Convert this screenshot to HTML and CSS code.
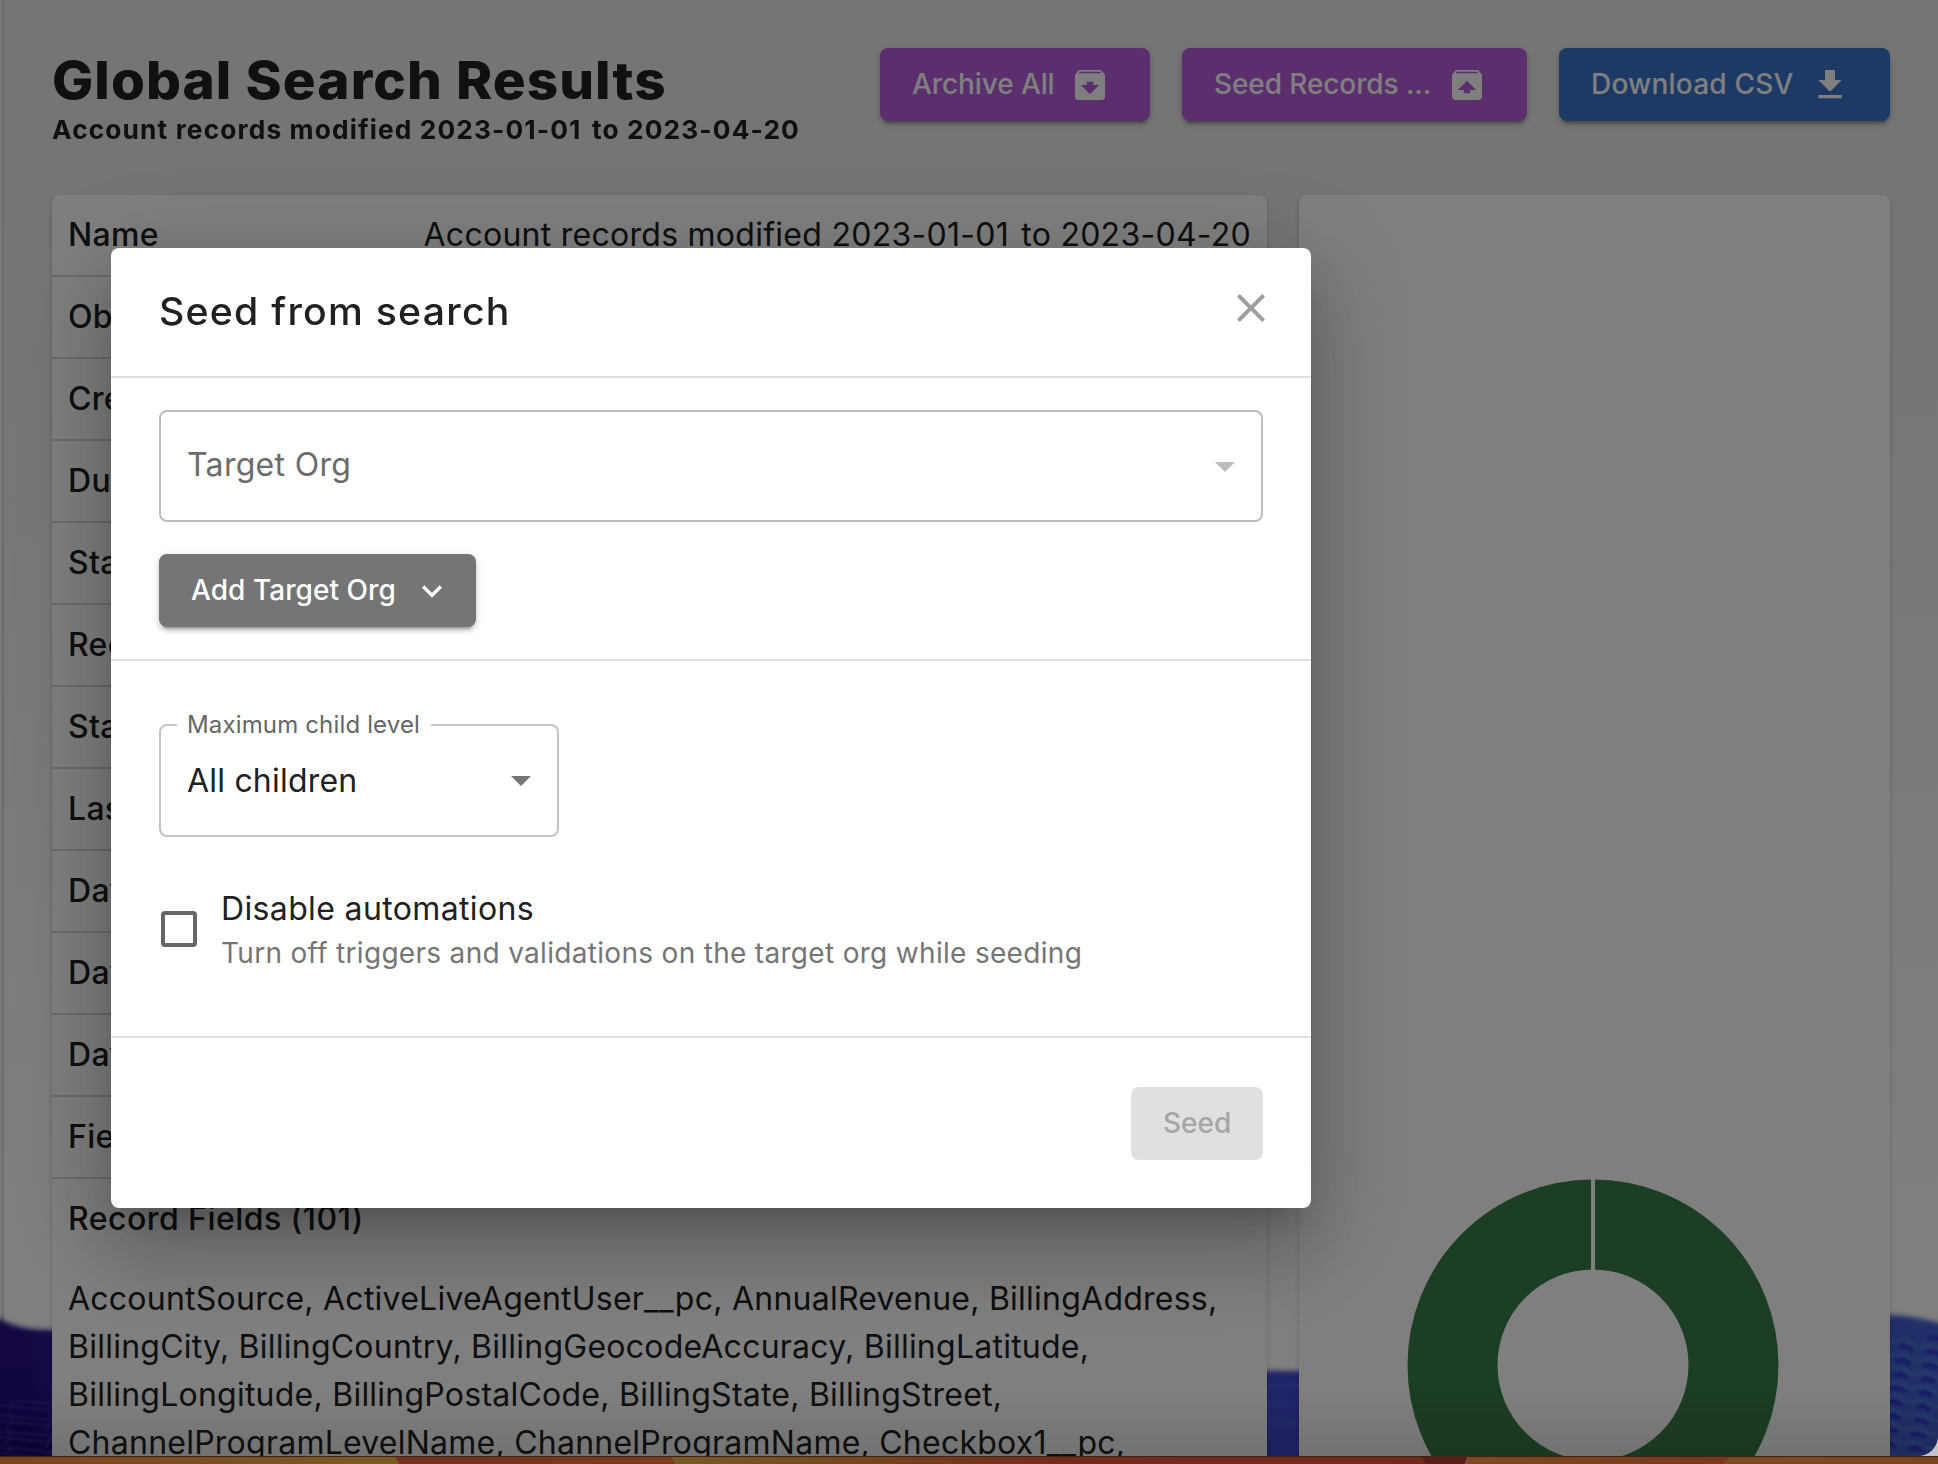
FILE: index.html
```html
<!DOCTYPE html>
<html lang="en">
<head>
<meta charset="utf-8">
<title>Global Search Results</title>
<link rel="stylesheet" href="styles.css">
</head>
<body>
<div class="app">
  <div class="rail"></div>
  <div class="page">
    <svg class="waves" viewBox="0 0 1938 164" preserveAspectRatio="none" aria-hidden="true">
      <defs>
        <linearGradient id="sea" x1="0" x2="1" y1="0" y2="0">
          <stop offset="0" stop-color="#241080"/><stop offset=".03" stop-color="#28128a"/><stop offset=".65" stop-color="#4148d0"/><stop offset=".95" stop-color="#4058d0"/><stop offset="1" stop-color="#4464d4"/>
        </linearGradient>
        <linearGradient id="deep" x1="0" x2="0" y1="0" y2="1"><stop offset="0" stop-color="#180870" stop-opacity="0"/><stop offset="1" stop-color="#140468"/></linearGradient>
        <pattern id="grid" width="40" height="16" patternUnits="userSpaceOnUse" patternTransform="rotate(5)">
          <path d="M0 3H40M0 9H40M24 0L18 16" fill="none" stroke="#5340b8" stroke-width="2" opacity=".5"/>
        </pattern>
        <pattern id="ripples" width="28" height="14" patternUnits="userSpaceOnUse" patternTransform="rotate(10)">
          <path d="M0 5Q7 1 14 5T28 5" fill="none" stroke="#5498d4" stroke-width="3" opacity=".4"/>
          <path d="M2 11Q9 7 16 11" fill="none" stroke="#2418c8" stroke-width="4" opacity=".6"/>
        </pattern>
        <filter id="soft"><feGaussianBlur stdDeviation="2.5"/></filter>
        <filter id="haze"><feGaussianBlur stdDeviation="1"/></filter>
      </defs>
      <path d="M-10 14C8 24 20 30 52 30C500 60 1100 70 1290 71C1500 68 1750 16 1890 15C1910 15 1925 20 1950 25V180H-10Z" fill="url(#sea)" filter="url(#soft)"/>
      <path d="M-10 60H60V180H-10Z" fill="url(#deep)"/>
      <g filter="url(#haze)">
        <path d="M-10 100H60V180H-10Z" fill="url(#grid)"/>
        <path d="M1880 36H1950V180H1880Z" fill="url(#ripples)"/>
        <path d="M1260 86H1310M1260 104H1310M1260 122H1310" stroke="#5060dc" stroke-width="6" opacity=".4"/>
      </g>
    </svg>
    <header class="head">
      <div class="titles">
        <h1 class="title">Global Search Results</h1>
        <h2 class="subtitle">Account records modified 2023-01-01 <span class="to">to</span> 2023-04-20</h2>
      </div>
      <div class="actions">
        <button class="btn purple w-archive"><span>Archive All</span><svg class="icon" viewBox="0 0 24 24"><path d="M20.54 5.23l-1.39-1.68C18.88 3.21 18.47 3 18 3H6c-.47 0-.88.21-1.16.55L3.46 5.23C3.17 5.57 3 6.02 3 6.5V19c0 1.1.9 2 2 2h14c1.1 0 2-.9 2-2V6.5c0-.48-.17-.93-.46-1.27zM12 17.5L6.5 12H10v-2h4v2h3.500L12 17.5zM5.120 5l.81-1h12l.94 1H5.120z"/></svg></button>
        <button class="btn purple w-seed"><span>Seed Records ...</span><svg class="icon" viewBox="0 0 24 24"><path d="M20.55 5.220l-1.39-1.680C18.880 3.210 18.470 3 18 3H6c-.47 0-.88.210-1.150.550L3.460 5.220C3.170 5.570 3 6.010 3 6.500V19c0 1.100.890 2 2 2h14c1.100 0 2-.900 2-2V6.500c0-.490-.170-.930-.450-1.280zM12 9.500l5.500 5.500H14v2h-4v-2H6.500L12 9.500zM5.120 5l.820-1h12l.930 1H5.120z"/></svg></button>
        <button class="btn blue w-csv"><span>Download CSV</span><svg class="icon" viewBox="0 0 24 24"><path d="M19 9h-4V3H9v6H5l7 7 7-7zM5 18v2h14v-2H5z"/></svg></button>
      </div>
    </header>
    <main class="cards">
      <section class="card details">
        <div class="row"><b>Name</b><span>Account records modified 2023-01-01 <span class="to">to</span> 2023-04-20</span></div>
        <div class="row"><b>Object</b></div>
        <div class="row"><b>Created</b></div>
        <div class="row"><b>Duration</b></div>
        <div class="row"><b>Status</b></div>
        <div class="row"><b>Records</b></div>
        <div class="row"><b>Started</b></div>
        <div class="row"><b>Last run</b></div>
        <div class="row"><b>Days</b></div>
        <div class="row"><b>Days from</b></div>
        <div class="row"><b>Days to</b></div>
        <div class="row"><b>Fields</b></div>
        <div class="row last"><b>Record Fields (101)</b></div>
        <p class="fields">AccountSource, ActiveLiveAgentUser__pc, AnnualRevenue, BillingAddress,<br>BillingCity, BillingCountry, BillingGeocodeAccuracy, BillingLatitude,<br>BillingLongitude, BillingPostalCode, BillingState, BillingStreet,<br>ChannelProgramLevelName, ChannelProgramName, Checkbox1__pc,</p>
      </section>
      <section class="card chart">
        <svg class="donut" viewBox="0 0 372 372"><circle cx="186" cy="186" r="140.500" fill="none" stroke="#387c48" stroke-width="90"/><path d="M186 0V92" stroke="#fff" stroke-width="4"/></svg>
      </section>
    </main>
  </div>
</div>
<div class="backdrop"></div>
<svg class="wallpaper" viewBox="0 0 1938 8" preserveAspectRatio="none" aria-hidden="true">
  <defs>
    <linearGradient id="w1"><stop offset="0" stop-color="#7a4322"/><stop offset="1" stop-color="#7b5b25"/></linearGradient>
    <linearGradient id="w2"><stop offset="0" stop-color="#73301d"/><stop offset="1" stop-color="#7a3c1d"/></linearGradient>
    <linearGradient id="w3"><stop offset="0" stop-color="#7a5a26"/><stop offset=".25" stop-color="#73451f"/><stop offset=".5" stop-color="#742c1a"/><stop offset="1" stop-color="#702a1c"/></linearGradient>
    <linearGradient id="w4"><stop offset="0" stop-color="#7c4a25"/><stop offset="1" stop-color="#78351b"/></linearGradient>
    <linearGradient id="w5"><stop offset="0" stop-color="#7a4b24"/><stop offset="1" stop-color="#7a4420"/></linearGradient>
  </defs>
  <path d="M0 0H400V8H0Z" fill="url(#w1)"/><path d="M395 0H690V8H399Z" fill="url(#w2)"/><path d="M671 0H1430V8H675Z" fill="url(#w3)"/><path d="M1420 0H1468L1465 8H1426Z" fill="#59201a"/><path d="M1468 0H1740V8H1465Z" fill="url(#w4)"/><path d="M1730 0H1938V8H1723Z" fill="url(#w5)"/>
  <path d="M0 0H1938V1H0Z" fill="#3c2416"/>
</svg>
<div class="dialog" role="dialog">
  <div class="dialog-head">
    <h3 class="dialog-title">Seed from search</h3>
    <svg class="close" viewBox="0 0 24 24"><path d="M19 6.410L17.590 5 12 10.590 6.410 5 5 6.410 10.590 12 5 17.590 6.410 19 12 13.410 17.590 19 19 17.590 13.410 12z"/></svg>
  </div>
  <div class="target">
    <div class="field"><span class="placeholder">Target Org</span><svg class="caret light" viewBox="0 0 20 10"><path d="M0 0h20L10 10z"/></svg></div>
    <button class="btn grey"><span>Add Target Org</span><svg class="icon" viewBox="0 0 24 24"><path d="M16.590 8.590L12 13.170 7.410 8.590 6 10l6 6 6-6z"/></svg></button>
  </div>
  <div class="options">
    <fieldset class="select"><legend>Maximum child level</legend><div class="value"><span>All children</span><svg class="caret" viewBox="0 0 20 10"><path d="M0 0h20L10 10z"/></svg></div></fieldset>
    <label class="check"><i class="box"></i><span class="check-text"><span class="check-title">Disable automations</span><span class="check-help">Turn off triggers and validations on the target org while seeding</span></span></label>
  </div>
  <div class="dialog-foot"><button class="btn disabled"><span>Seed</span></button></div>
</div>
</body>
</html>
```
FILE: styles.css
```css
* { box-sizing: border-box; }
html { background: #c4c4c4; }
body {
  margin: 0;
  width: 1938px;
  height: 1464px;
  overflow: hidden;
  position: relative;
  font-family: Inter, "Liberation Sans", sans-serif;
  font-size: 32px;
  letter-spacing: 0.3px;
  color: #212121;
}
.app {
  display: flex;
  height: 1456px;
  overflow: hidden;
  background: #fff;
  border-radius: 0 0 20px 0;
}
.rail { width: 4px; flex: none; background: #f4f4f4; border-right: 2px solid #d9d9d9; }
.page {
  position: relative;
  flex: 1;
  padding: 48px 48px 0;
  background: linear-gradient(#ebebeb 0, #ebebeb 200px, #efefef 500px, #fdfdfd 1150px, #fff 1250px);
}
.waves { position: absolute; left: -4px; top: 1300px; width: 1938px; height: 164px; }
.head { display: flex; justify-content: space-between; height: 147px; position: relative; }
.title, .subtitle, .dialog-title { margin: 0; white-space: nowrap; transform-origin: 0 50%; }
.title { font-size: 52px; line-height: 65px; font-weight: 800; letter-spacing: 1px; width: 600px; transform: scaleX(1.055); }
.subtitle { font-size: 26px; line-height: 34px; font-weight: 700; letter-spacing: 1.1px; width: 740px; transform: scaleX(1.012); }
.to { margin-left: 3px; }
.actions { display: flex; gap: 32px; }
.btn {
  display: flex;
  align-items: center;
  justify-content: space-between;
  height: 73px;
  padding: 0 40px 0 32px;
  border: 0;
  border-radius: 8px;
  color: #fff;
  font: 500 28px/49px Inter, "Liberation Sans", sans-serif;
  letter-spacing: 0;
  white-space: nowrap;
  box-shadow: 0 6px 2px -4px rgba(0,0,0,.2), 0 4px 4px rgba(0,0,0,.14), 0 2px 10px rgba(0,0,0,.12);
}
.icon { width: 40px; height: 40px; fill: currentColor; flex: none; }
.purple { background: #b65cdb; letter-spacing: -0.1px; }
.blue { background: #3874cb; letter-spacing: 0.2px; }
.w-archive { width: 270px; }
.w-seed { width: 345px; }
.w-csv { width: 331px; }
.cards { display: flex; gap: 32px; position: relative; }
.card {
  height: 1400px;
  background: #fff;
  border-radius: 8px;
  box-shadow: 0 4px 2px -2px rgba(0,0,0,.2), 0 2px 2px rgba(0,0,0,.14), 0 2px 6px rgba(0,0,0,.12);
}
.details { width: 1215px; }
.row {
  display: flex;
  justify-content: space-between;
  height: 82px;
  padding: 0 16px;
  line-height: 80px;
  border-bottom: 2px solid #d9d9d9;
}
.row.last { border: 0; letter-spacing: .45px; }
.row b { font-weight: 500; }
.row span { font-weight: 400; letter-spacing: .27px; }
.fields { margin: 14px 16px 0; line-height: 48px; white-space: nowrap; letter-spacing: .24px; }
.chart { width: 591px; padding: 984px 0 0 108px; }
.donut { display: block; width: 372px; height: 372px; }
.backdrop {
  position: absolute;
  left: 0;
  top: 0;
  width: 1938px;
  height: 1456px;
  background: linear-gradient(transparent 1390px, rgba(0,0,0,.1) 1456px), rgba(0,0,0,.5);
  border-radius: 0 0 20px 0;
}
.wallpaper { position: absolute; left: 0; top: 1456px; width: 1938px; height: 8px; }
.dialog {
  position: absolute;
  left: 111px;
  top: 248px;
  width: 1200px;
  height: 960px;
  background: #fff;
  border-radius: 8px;
  box-shadow: 0 22px 30px -14px rgba(0,0,0,.2), 0 48px 76px 6px rgba(0,0,0,.14), 0 18px 92px 16px rgba(0,0,0,.12);
}
.dialog-head {
  display: flex;
  justify-content: space-between;
  height: 130px;
  padding: 36px 36px 0 48px;
  border-bottom: 2px solid #e0e0e0;
}
.dialog-title { font-size: 38px; line-height: 54px; font-weight: 500; letter-spacing: 1.2px; transform: scaleX(1.032); }
.close { width: 48px; height: 48px; fill: #9e9e9e; }
.target { height: 283px; padding: 32px 48px 0; border-bottom: 2px solid #e0e0e0; }
.field {
  display: flex;
  align-items: center;
  justify-content: space-between;
  height: 112px;
  margin-bottom: 32px;
  padding: 0 26px;
  border: 2px solid #bdbdbd;
  border-radius: 8px;
}
.placeholder { color: #6b6b6b; line-height: 46px; margin-bottom: 2px; }
.caret { width: 20px; height: 10px; fill: #757575; margin-top: 2px; }
.caret.light { fill: #bdbdbd; }
.grey { background: #757575; width: 317px; padding-right: 24px; letter-spacing: .06px; }
.options { height: 377px; padding: 54px 48px 0; border-bottom: 2px solid #e0e0e0; }
.select {
  width: 400px;
  height: 122px;
  margin: 0;
  padding: 0 26px 0;
  border: 2px solid #c4c4c4;
  border-radius: 8px;
  min-width: 0;
}
.select legend {
  margin-left: -10px;
  padding: 0 11px 0 10px;
  font-size: 24px;
  line-height: 20px;
  letter-spacing: .15px;
  color: #666;
}
.value { display: flex; align-items: center; justify-content: space-between; height: 90px; letter-spacing: .2px; }
.check { display: flex; align-items: center; gap: 24px; margin-top: 48px; padding-left: 2px; }
.box { width: 36px; height: 36px; border: 4px solid #666; border-radius: 4px; flex: none; }
.check-text { display: flex; flex-direction: column; }
.check-title { line-height: 48px; letter-spacing: .36px; }
.check-help { font-size: 28px; line-height: 40px; letter-spacing: .31px; color: #757575; }
.dialog-foot { display: flex; justify-content: flex-end; padding: 49px 48px 0; }
.disabled { width: 132px; padding: 0 32px; background: #e0e0e0; color: #a6a6a6; box-shadow: none; }
```
